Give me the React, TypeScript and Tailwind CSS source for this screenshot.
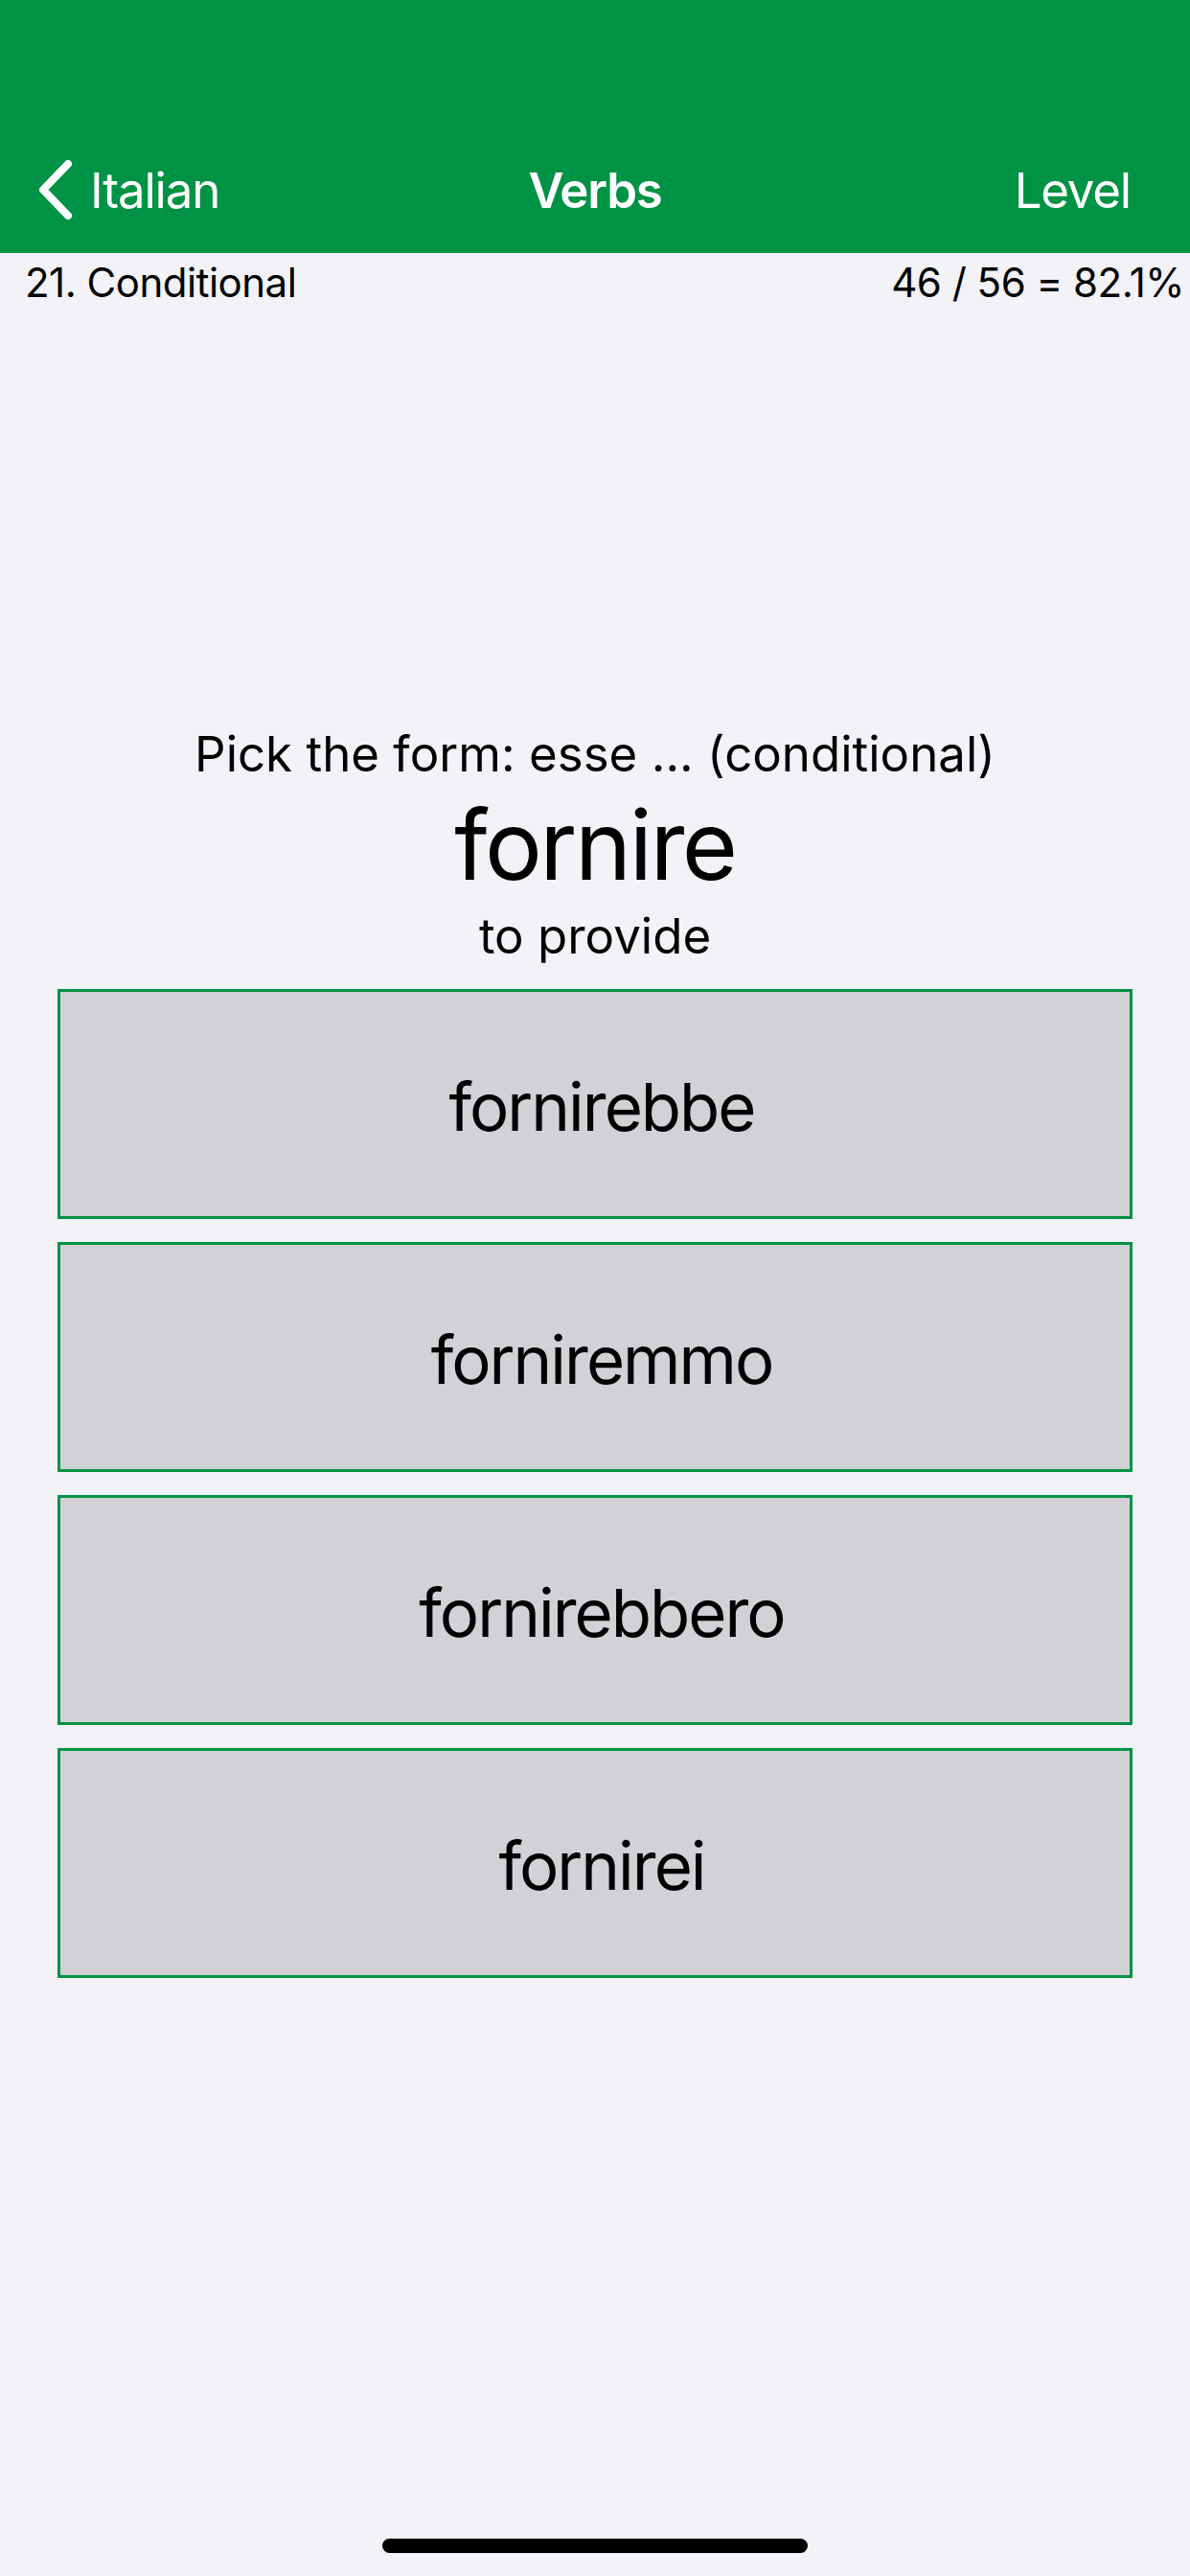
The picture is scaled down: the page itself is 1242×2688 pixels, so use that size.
const choices = ["fornirebbe", "forniremmo", "fornirebbero", "fornirei"];

function BackChevron() {
  return (
    <svg width="38" height="62" viewBox="0 0 38 62" fill="none">
      <path
        d="M33 4 L7 31 L33 58"
        stroke="white"
        strokeWidth="8"
        strokeLinecap="round"
        strokeLinejoin="round"
      />
    </svg>
  );
}

function App() {
  return (
    <div className="min-h-[2688px] w-[1242px] bg-[#f2f2f7] flex flex-col font-['Inter','Liberation_Sans',sans-serif] text-black">
      {/* nav bar */}
      <div className="h-[264px] bg-[#009245] flex items-end">
        <div className="h-[132px] w-full grid grid-cols-[1fr_auto_1fr] items-center text-white text-[51px] leading-[61px] tracking-[-1.2px]">
          <div className="flex items-center pl-[38px]">
            <BackChevron />
            <span className="ml-[18px]">Italian</span>
          </div>
          <div className="font-semibold">Verbs</div>
          <div className="text-right pr-[62px]">Level</div>
        </div>
      </div>

      <div className="flex justify-between pl-[26px] pr-[6px] pt-[6px] text-[42px] leading-[50px] tracking-[-0.5px]">
        <span>21. Conditional</span>
        <span>46 / 56 = 82.1%</span>
      </div>

      <div className="mt-[436px] flex flex-col items-center text-center">
        <p className="text-[51px] leading-[61px]">Pick the form: esse ... (conditional)</p>
        <p className="text-[100px] leading-[129px] tracking-[-2.5px]">fornire</p>
        <p className="text-[51px] leading-[61px]">to provide</p>
      </div>

      <div className="mt-[25px] px-[60px] flex flex-col gap-[24px]">
        {choices.map((c) => (
          <button
            key={c}
            type="button"
            className="h-[240px] w-full border-[3px] border-[#009245] bg-[#d1d1d6] flex items-center justify-center pt-[6px] pl-[14px] text-[69px] leading-[84px] tracking-[-2px]"
          >
            {c}
          </button>
        ))}
      </div>

      <div className="flex-1" />
      <div className="flex justify-center mb-[24px]">
        <div className="w-[444px] h-[15px] rounded-full bg-black" />
      </div>
    </div>
  );
}

export default App;
